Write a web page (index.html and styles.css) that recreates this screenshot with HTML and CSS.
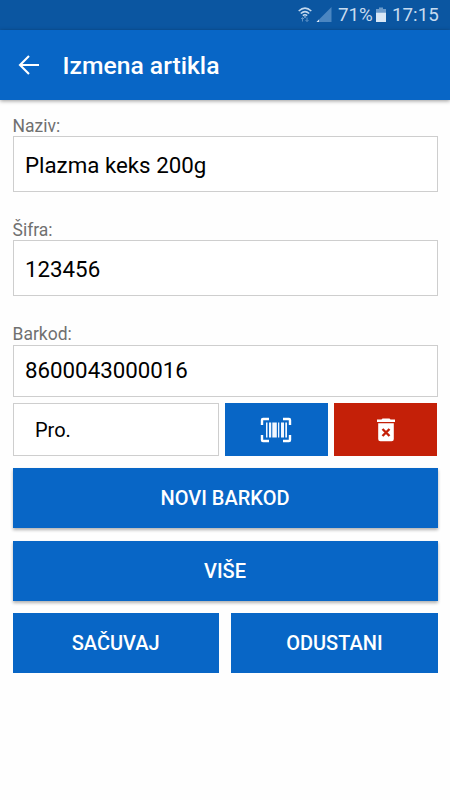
FILE: index.html
```html
<!DOCTYPE html>
<html lang="sr-Latn">
<head>
<meta charset="utf-8">
<title>Izmena artikla</title>
<link rel="stylesheet" href="styles.css">
</head>
<body>
<div class="status">
  <svg class="wifi" width="14" height="16" viewBox="0 0 14 16" fill="none" stroke="#c3d8ee" stroke-width="1.5">
    <path d="M.7 4Q7-1.8 13.3 4M2.8 6.5Q7 2.7 11.2 6.5M4.8 8.7Q7 6.9 9.2 8.7"/>
    <path d="M5.7 9.4h2.6L7 11z" fill="#c3d8ee" stroke="none"/>
    <path d="M4.5 14.5v-4M3 12l1.500-1.500L6 12M9 10.500v4M7.500 13L9 14.500 10.500 13" stroke="#5e92c7" stroke-width="1"/>
  </svg>
  <svg class="signal" width="16" height="16" viewBox="0 0 16 16"><path d="M15.500 0v15H.500z" fill="#4b86c1"/><path d="M3 12.500V15H.500z" fill="#dce9f7"/></svg>
  <span class="percent">71%</span>
  <svg class="battery" width="10" height="16" viewBox="0 0 10 16"><path d="M3 .500h4V2h3v3.500H0V2h3z" fill="#6c9bcb"/><path d="M0 5.500h10V15H0z" fill="#d8e7f6"/></svg>
  <span class="clock">17:15</span>
</div>
<header class="appbar">
  <svg class="back" width="22" height="20" viewBox="0 0 22 20" fill="none" stroke="#fff" stroke-width="2.100"><path d="M21 10H2M11 1L2 10l9 9"/></svg>
  <h1>Izmena artikla</h1>
</header>
<main class="form">
  <div class="field"><label>Naziv:</label><div class="input">Plazma keks 200g</div></div>
  <div class="field"><label>Šifra:</label><div class="input">123456</div></div>
  <div class="field barcode"><label>Barkod:</label><div class="input">8600043000016</div></div>
  <div class="tools">
    <div class="unit">Pro.</div>
    <button class="scan" aria-label="Skeniraj">
      <svg width="32" height="26" viewBox="0 0 32 26"><path d="M2 8V3q0-1 1-1h6M23 2h6q1 0 1 1v5M30 18v5q0 1-1 1h-6M9 24H3q-1 0-1-1v-5" fill="none" stroke="#fff" stroke-width="2.400"/><path d="M6 5.500h1.500v15H6zM9 5.500h2.200v15H9zM12.300 5.500h4.500v15h-4.500zM18 5.500h1.300v15H18zM21 5.500h3v15h-3zM25.300 5.500h1.700v15h-1.700z" fill="#f2f7ff"/></svg>
    </button>
    <button class="delete" aria-label="Obriši">
      <svg width="18" height="24" viewBox="0 0 18 24"><path d="M0 1.500h4.500L5.500.500h7l1 1H18V4H0z" fill="#fff"/><path d="M1.200 5.300h15.600V21q0 2.200-2.200 2.200H3.400Q1.200 23.200 1.200 21z" fill="#fff"/><path d="M5.500 11l7 7M12.500 11l-7 7" stroke="#c42008" stroke-width="2.400"/></svg>
    </button>
  </div>
  <button class="wide">NOVI BARKOD</button>
  <button class="wide">VIŠE</button>
  <div class="actions"><button>SAČUVAJ</button><button>ODUSTANI</button></div>
</main>
</body>
</html>
```
FILE: styles.css
```css
* { box-sizing: border-box; }
body { margin: 0; min-height: 800px; background: #fefefe; font-family: Roboto, sans-serif; }
svg { display: block; flex: none; }
.status { height: 30px; background: #0b56a1; color: #c7dbef; display: flex; align-items: center; padding-left: 298px; font-size: 18.800px; line-height: 30px; white-space: nowrap; }
.signal { margin-left: 4px; }
.percent { margin-left: 6px; width: 34px; }
.battery { margin-left: 4px; }
.clock { margin-left: 6px; }
.appbar { height: 70px; background: #0866c6; display: flex; align-items: center; padding-left: 18px; color: #fff; box-shadow: 0 1px 4px rgba(0, 0, 0, .4); }
.appbar h1 { margin: 2px 0 0 22.500px; font-size: 24.700px; font-weight: 500; line-height: 30px; }
.form { padding: 16px 12.500px 0; }
.field { height: 104px; }
.field label { display: block; height: 20px; font-size: 17.500px; line-height: 20px; color: #707070; }
.input { height: 56px; border: 1.500px solid #cecece; background: #fff; padding: 1px 0 0 11.500px; font-size: 22.300px; line-height: 55px; color: #000; }
.barcode { height: 77px; }
.barcode .input { height: 52px; padding-top: 0; margin-top: 1px; line-height: 49px; }
.tools { display: grid; grid-template-columns: 206px 103px 103px; column-gap: 6.400px; height: 53px; margin-top: 2px; }
.unit { height: 53px; border: 1.500px solid #cecece; background: #fff; padding-left: 21.500px; font-size: 20px; line-height: 52px; }
button { display: flex; align-items: center; justify-content: center; padding: 0; border: 0; background: #0866c6; color: #fff; font: 500 20px/24px Roboto, sans-serif; height: 60px; }
.tools button { height: 53px; }
.tools .delete { background: #c42008; }
.wide { width: 100%; margin-top: 12px; box-shadow: 0 2px 3px rgba(0, 0, 0, .3); }
.wide + .wide { margin-top: 13px; }
.actions { display: grid; grid-template-columns: 1fr 1fr; gap: 12.500px; margin-top: 12px; }
```
